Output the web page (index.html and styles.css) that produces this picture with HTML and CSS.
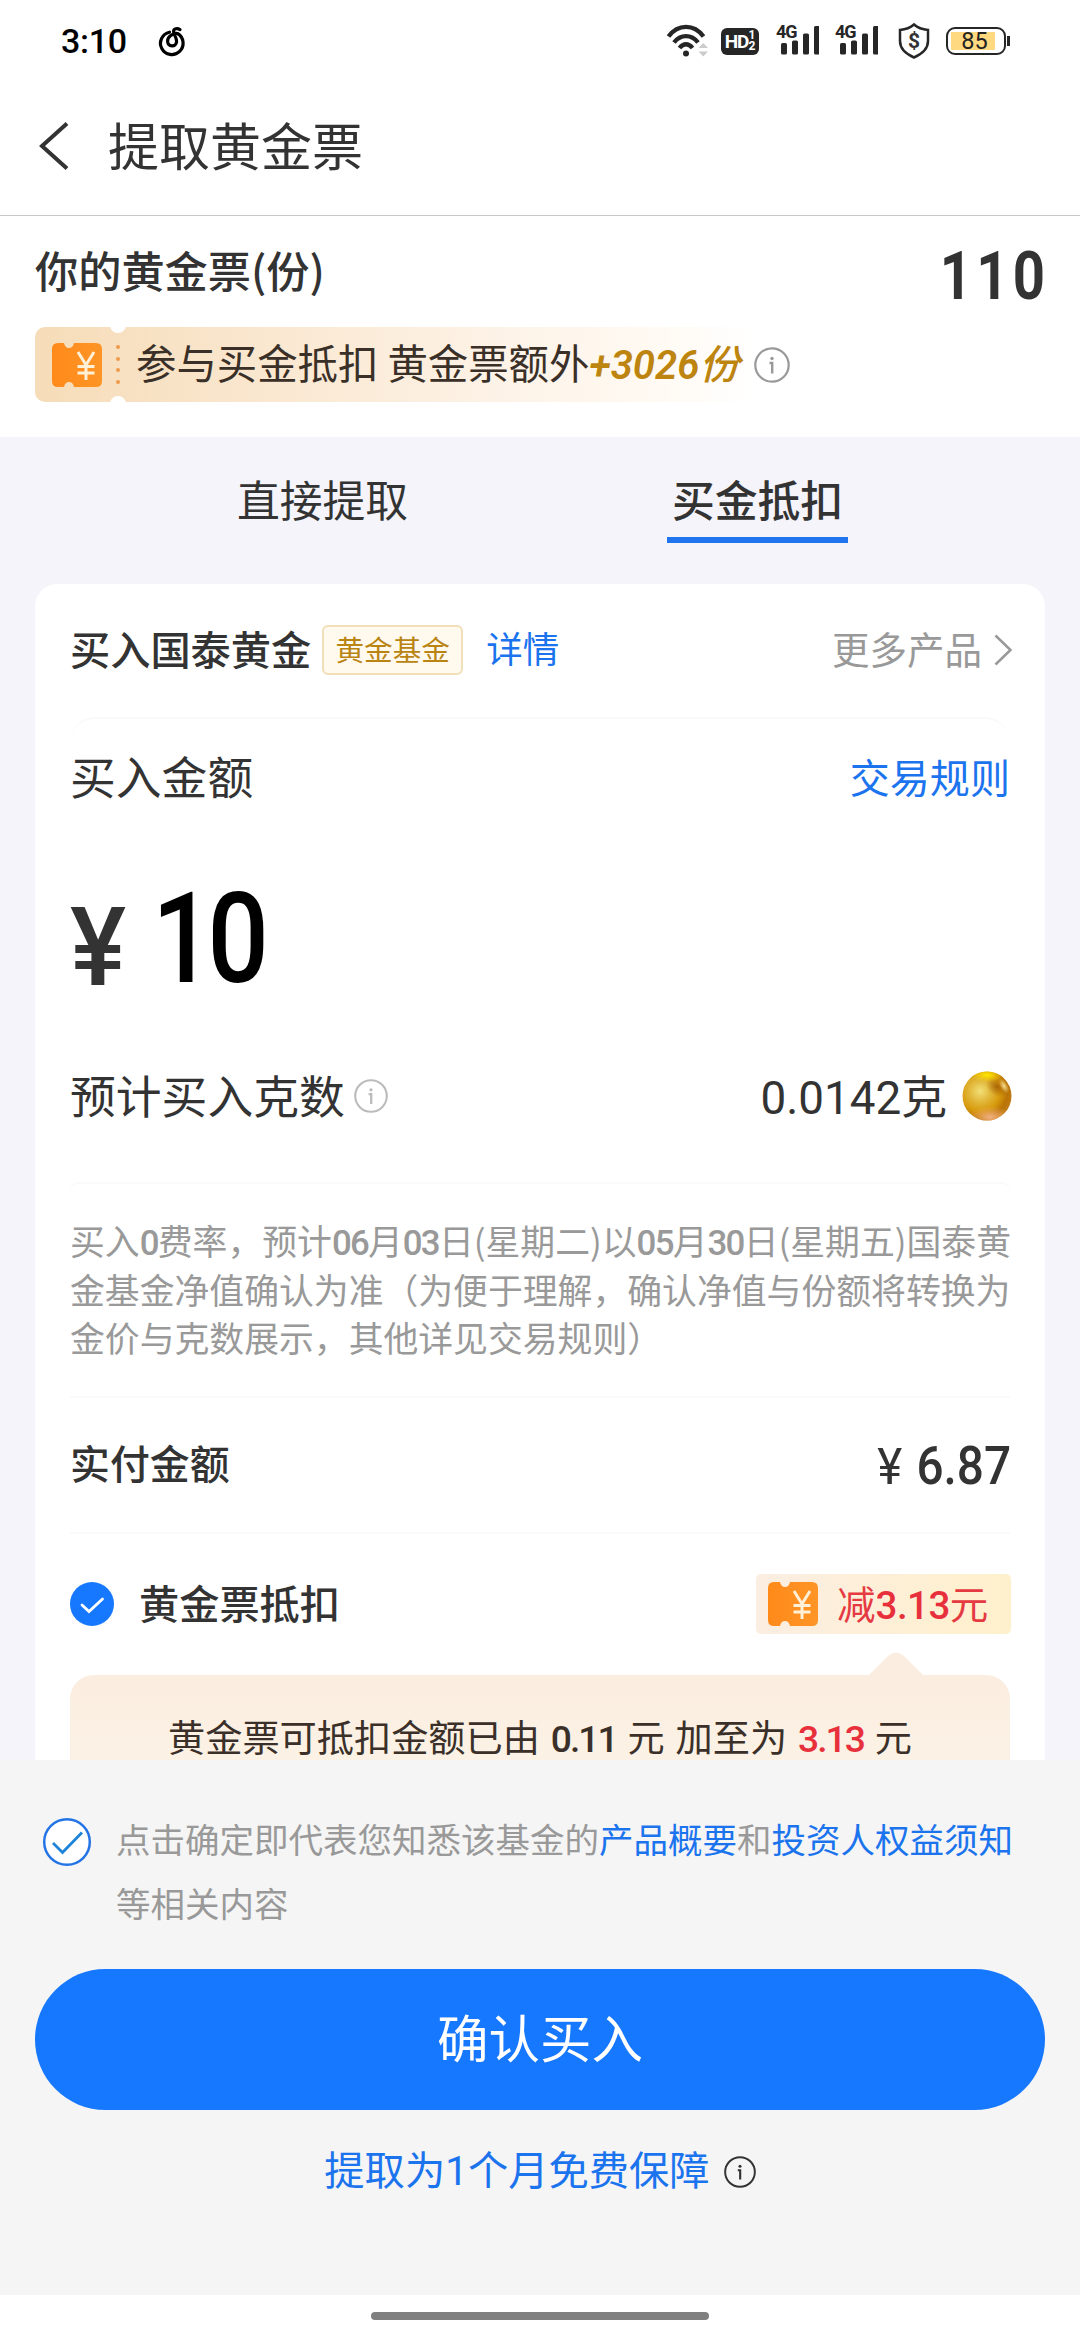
FILE: index.html
```html
<!DOCTYPE html>
<html lang="zh-CN">
<head>
<meta charset="utf-8">
<title>提取黄金票</title>
<link rel="stylesheet" href="styles.css">
</head>
<body>
<svg class="defs" width="0" height="0">
  <defs>
    <linearGradient id="ticketFill" x1="0" y1="0" x2="1" y2="0">
      <stop offset="0" stop-color="#ff8a1a"/><stop offset="1" stop-color="#fe9526"/>
    </linearGradient>
    <radialGradient id="ballFill" cx="0.36" cy="0.4" r="0.66">
      <stop offset="0" stop-color="#f3e078"/><stop offset="0.3" stop-color="#e3bb40"/>
      <stop offset="0.62" stop-color="#d79a0c"/><stop offset="0.85" stop-color="#b97206"/><stop offset="1" stop-color="#c07c14"/>
    </radialGradient>
    <radialGradient id="ballTop"><stop offset="0" stop-color="#ffea00"/><stop offset="1" stop-color="#ffd800" stop-opacity="0"/></radialGradient>
    <radialGradient id="ballShade"><stop offset="0" stop-color="#9a5200"/><stop offset="1" stop-color="#a05a00" stop-opacity="0"/></radialGradient>
    <radialGradient id="ballGlow"><stop offset="0" stop-color="#f3b184"/><stop offset="1" stop-color="#f0a860" stop-opacity="0"/></radialGradient>
    <radialGradient id="ballGlint"><stop offset="0" stop-color="#f6dc90"/><stop offset="1" stop-color="#f6dc90" stop-opacity="0"/></radialGradient>
    <clipPath id="ballClip"><circle cx="25" cy="25" r="24.500"/></clipPath>
    <symbol id="ticket" viewBox="0 0 50 44">
      <path fill="url(#ticketFill)" d="M6 0H12Q13 5 17 5T22 0H44Q50 0 50 6V38Q50 44 44 44H22Q21 39 17 39T12 44H6Q0 44 0 38V6Q0 0 6 0Z"/>
      <path fill="none" stroke="#fff0d8" stroke-width="3" d="M26 9L34 22L42 9M34 22V37M25.5 23.5H42.5M25.5 30H42.5"/>
    </symbol>
    <symbol id="info" viewBox="0 0 36 36">
      <circle cx="18" cy="18" r="16.7" fill="none" stroke="currentColor" stroke-width="2.2"/>
      <circle cx="18" cy="11.5" r="1.7" fill="currentColor"/>
      <path fill="none" stroke="currentColor" stroke-width="2.4" d="M15.5 16H18.2V26.5"/>
    </symbol>
    <symbol id="signal" viewBox="0 0 38 30">
      <rect x="0" y="17" width="6" height="11.5" rx="1.5"/><rect x="11" y="14.5" width="6" height="14" rx="1.5"/>
      <rect x="22" y="7.5" width="6" height="21" rx="1.5"/><rect x="33" y="0" width="6" height="28.5" rx="1.5"/>
    </symbol>
  </defs>
</svg>

<header class="status">
  <div class="status-left">
    <span class="clock">3:10</span>
    <svg class="music" viewBox="0 0 26 29"><path d="M10.5 5.2A11.3 11.3 0 1 0 18.5 6.5C14 6 8.3 9.5 8.6 14.5C9 20 17 20.5 17.6 14.8C18 11 14.5 7.5 14.6 4.2C14.7 1.5 18.5 1 21 2.6"/></svg>
  </div>
  <div class="status-right">
    <svg class="wifi" viewBox="0 0 42 34">
      <g fill="none" stroke="#262626" stroke-width="4.4"><path d="M1.5 12.5C11-.3 27-.3 36.5 12.5"/><path d="M7 18.5C13.5 10 24.5 10 31 18.5"/><path d="M12.5 24C16.5 19 21.5 19 25.5 24"/></g>
      <circle cx="19" cy="29.5" r="3" fill="#262626"/>
      <path fill="#ccc" d="M31.5 24L36.3 19L41 24ZM31.5 27.5H41L36.3 32.5Z"/>
    </svg>
    <div class="hd"><b>HD</b><span><i>1</i><i>2</i></span></div>
    <div class="signal"><svg><use href="#signal"/></svg><b>4G</b></div>
    <div class="signal"><svg><use href="#signal"/></svg><b>4G</b></div>
    <div class="shield">
      <svg viewBox="0 0 32 36"><path d="M16 1.5C20 5 25 6.5 30 7V18C30 26 24 31 16 34.5C8 31 2 26 2 18V7C7 6.5 12 5 16 1.5Z"/></svg>
      <b>$</b>
    </div>
    <div class="battery"><span>85</span></div>
  </div>
</header>

<nav class="titlebar">
  <svg class="back" viewBox="0 0 30 48"><path d="M28 1.5L3 24L28 46.5"/></svg>
  <h1>提取黄金票</h1>
</nav>

<section class="summary">
  <div class="balance"><h2>你的黄金票(份)</h2><strong>110</strong></div>
  <div class="promo">
    <svg class="ticket"><use href="#ticket"/></svg>
    <span class="perforation"><i></i><i></i><i></i><i></i></span>
    <span class="promo-text">参与买金抵扣 黄金票额外<em><span class="extra">+3026</span>份</em></span>
    <svg class="info promo-info"><use href="#info"/></svg>
  </div>
</section>

<main class="content">
  <div class="tabs">
    <div class="tab"><span>直接提取</span></div>
    <div class="tab active"><span>买金抵扣</span></div>
  </div>
  <div class="card">
    <div class="product">
      <b>买入国泰黄金</b><span class="tag">黄金基金</span><a>详情</a>
      <span class="more">更多产品<svg viewBox="0 0 18 32"><path d="M1.5 1.5L16.5 16L1.5 30.5"/></svg></span>
    </div>
    <section class="purchase">
      <div class="row amount-head"><span>买入金额</span><a>交易规则</a></div>
      <div class="amount"><span class="yen">¥</span><span class="value">10</span></div>
      <div class="row grams"><span>预计买入克数</span><svg class="info gram-info"><use href="#info"/></svg>
        <span class="gram-value"><span class="num">0.0142</span>克</span>
        <svg class="ball" viewBox="0 0 50 50">
          <circle cx="25" cy="25" r="24.5" fill="url(#ballFill)"/>
          <g clip-path="url(#ballClip)">
            <ellipse cx="35" cy="16" rx="12" ry="9" fill="url(#ballShade)" opacity=".75" transform="rotate(35 35 16)"/>
            <ellipse cx="25" cy="4" rx="16" ry="7" fill="url(#ballTop)"/>
            <ellipse cx="28" cy="46" rx="22" ry="11" fill="url(#ballGlow)"/>
            <ellipse cx="42" cy="15" rx="4" ry="8" fill="url(#ballGlint)" transform="rotate(-30 42 15)"/>
          </g>
        </svg>
      </div>
    </section>
    <p class="notice"><span>买入<b>0</b>费率，预计<b>06</b>月<b>03</b>日(星期二)以<b>05</b>月<b>30</b>日(星期五)国泰黄</span><span>金基金净值确认为准（为便于理解，确认净值与份额将转换为</span><span>金价与克数展示，其他详见交易规则）</span></p>
    <div class="row payable"><b>实付金额</b><span class="pay"><span class="pay-yen">¥</span><span class="pay-num">6.87</span></span></div>
    <div class="deduct">
      <svg class="checked" viewBox="0 0 44 44"><circle cx="22" cy="22" r="22" fill="#1677ff"/><path d="M12 23L19 29.5L32.5 17" fill="none" stroke="#fff" stroke-width="2.8" stroke-linecap="round"/></svg>
      <b>黄金票抵扣</b>
      <div class="saving"><svg class="ticket"><use href="#ticket"/></svg><span>减<b class="num">3.13</b>元</span></div>
    </div>
    <div class="bubble">
      <svg class="arrow" viewBox="0 0 56 24"><path d="M0 24L20 4Q28-3 36 4L56 24Z"/></svg>
      <span>黄金票可抵扣金额已由 <b class="num">0.11</b> 元 加至为 <b class="num red">3.13</b> 元</span>
    </div>
  </div>
</main>

<footer class="confirm">
  <div class="agree">
    <svg viewBox="0 0 50 50"><circle cx="25" cy="25" r="22.8" fill="#fff" stroke="#2474e5" stroke-width="2.5"/><path d="M11 26L20.5 35.5L40 15.5" fill="none" stroke="#1c83d8" stroke-width="2.8"/></svg>
    <p>点击确定即代表您知悉该基金的<a>产品概要</a>和<a>投资人权益须知</a><br>等相关内容</p>
  </div>
  <button>确认买入</button>
  <div class="guarantee"><a>提取为<span class="one">1</span>个月免费保障</a><svg class="info guarantee-info"><use href="#info"/></svg></div>
</footer>
<div class="home"><i></i></div>
</body>
</html>
```
FILE: styles.css
```css
* { box-sizing: border-box; margin: 0; padding: 0; }
body {
  width: 1080px; height: 2340px; overflow: hidden;
  display: flex; flex-direction: column;
  background: #fff; color: #333;
  font-family: "Noto Sans CJK SC", sans-serif;
  white-space: nowrap;
}
svg { display: block; flex: none; overflow: visible; }
.defs { position: absolute; }
i { font-style: normal; }
a { color: #1b74ee; }
b, h2 { font-weight: 500; }
.num { font-family: Roboto, sans-serif; line-height: 1; }

/* status bar */
.status { height: 82px; display: flex; justify-content: space-between; padding: 0 74px 0 61px; font-family: Roboto, sans-serif; }
.status-left, .status-right { display: flex; align-items: center; }
.clock { font-size: 34px; font-weight: 500; color: #000; letter-spacing: -0.3px; }
.music { width: 26px; height: 29px; margin-left: 32px; }
.music path { fill: none; stroke: #000; stroke-width: 3.2; stroke-linecap: round; }
.wifi { width: 42px; height: 34px; margin-right: 12px; }
.hd { width: 38px; height: 27px; border-radius: 6px; background: #262626; color: #fff; display: flex; align-items: center; justify-content: center; margin-right: 22px; }
.hd b { font-size: 19px; font-weight: 700; letter-spacing: -1px; }
.hd span { display: flex; flex-direction: column; font-size: 12px; font-weight: 700; line-height: 11px; }
.signal { width: 39px; height: 30px; position: relative; margin-right: 20px; }
.signal svg { width: 38px; height: 30px; fill: #262626; }
.signal b { position: absolute; left: -5px; top: -4px; font-size: 18px; line-height: 20px; font-weight: 700; color: #262626; background: #fff; height: 18px; letter-spacing: -1px; }
.shield { width: 32px; height: 36px; position: relative; margin-right: 16px; margin-left: -1px; }
.shield path { fill: none; stroke: #262626; stroke-width: 2.5; }
.shield b { position: absolute; inset: 0; text-align: center; font-size: 21px; line-height: 36px; font-weight: 700; }
.battery { width: 60px; height: 28px; border: 2.5px solid #262626; border-radius: 9px; padding: 3px; display: flex; position: relative; }
.battery::after { content: ""; position: absolute; right: -6px; top: 7px; width: 3px; height: 10px; background: #262626; }
.battery span { width: 44px; background: #ffd980; color: #222; font-size: 23.5px; line-height: 18px; text-align: center; padding-left: 3px; }

/* title */
.titlebar { height: 134px; display: flex; align-items: center; padding: 0 0 9px 39px; border-bottom: 1px solid #c8c8c8; }
.back { width: 30px; height: 48px; margin-right: 39px; margin-top: 4px; }
.back path { fill: none; stroke: #333; stroke-width: 4; }
h1 { font-size: 51px; font-weight: 400; line-height: 60px; }

/* ticket balance */
.summary { height: 221px; padding: 0 35px; }
.balance { height: 111px; display: flex; justify-content: space-between; align-items: center; }
.balance h2 { font-size: 43.2px; line-height: 50px; margin-top: -5px; }
.balance strong { font: 700 67px/67px Roboto, sans-serif; transform: scaleX(.84); transform-origin: right; letter-spacing: 5px; padding-top: 10px; margin-right: -4px; }
.promo {
  width: 800px; height: 75px; border-radius: 10px 0 0 10px; display: flex; align-items: center; padding-left: 17px;
  background: linear-gradient(90deg, #f6dcb8 0, #f9e5cb 23%, #fdf2e6 57%, #fffaf3 78%, #fff 90%);
  font-size: 40.4px; color: #3a3028;
}
.ticket { width: 50px; height: 44px; }
.perforation {
  width: 26px; height: 75px; margin: 0 5px 0 3px; display: flex; flex-direction: column; align-items: center; justify-content: center; gap: 7.5px;
  background: radial-gradient(circle at 50% -2px, #fff 7.5px, transparent 8.5px), radial-gradient(circle at 50% 77px, #fff 7.5px, transparent 8.5px);
}
.perforation i { width: 4px; height: 4px; border-radius: 50%; background: #f09a4a; }
.promo-text { margin-top: -5px; line-height: 60px; }
.promo em { color: #bd8510; font-weight: 500; }
.extra { font-family: Roboto, sans-serif; font-weight: 600; font-size: 40px; line-height: 1; }
.info { width: 36px; height: 36px; }
.promo-info { color: #999; margin-left: 14px; }

/* tabs */
.content { flex: 1; min-height: 0; overflow: hidden; background: #f4f4fa; padding: 0 35px; }
.tabs { height: 147px; display: flex; padding: 31px 70px 0; }
.tab { flex: 1; display: flex; flex-direction: column; align-items: center; font-size: 42.8px; line-height: 60px; }
.active { font-weight: 500; }
.active::after { content: ""; width: 181px; height: 6px; margin-top: 9px; background: #2075ee; }

/* product card */
.card { height: 1200px; background: #fff; border-radius: 22px 22px 0 0; padding: 0 35px; }
.product { height: 133px; padding-bottom: 6px; display: flex; align-items: center; font-size: 40.2px; }
.tag { height: 50px; width: 141px; margin: 5px 23px 0 11px; border: 2px solid #f1dfb9; border-radius: 6px; background: #fff9ee; color: #b98412; font-size: 28.6px; line-height: 44px; text-align: center; }
.product a { font-size: 36.5px; }
.more { margin-left: auto; display: flex; align-items: center; color: #999; font-size: 37.5px; }
.more svg { width: 18px; height: 32px; margin: 5px -2px 0 12px; }
.more path { fill: none; stroke: #999; stroke-width: 2.5; }
.row { display: flex; align-items: center; }
.purchase { height: 465px; border-top: 2px solid #fafafa; border-radius: 25px 25px 0 0; }
.amount-head { height: 116px; padding-bottom: 4px; font-size: 45.8px; justify-content: space-between; }
.amount-head a { font-size: 40.1px; }
.amount { height: 210px; display: flex; align-items: baseline; font-family: Roboto, sans-serif; }
.yen { font-size: 109px; font-weight: 500; line-height: 206px; width: 82px; transform: translateY(3px) scaleX(.97); transform-origin: left; }
.value { font-size: 127px; font-weight: 500; line-height: 208px; color: #000; transform: scaleX(.85); transform-origin: left; letter-spacing: -7px; }
.grams { height: 98px; padding-bottom: 1px; font-size: 45.8px; }
.gram-info { width: 34px; height: 34px; color: #bbb; margin: 5px 0 0 9px; }
.gram-value { margin-left: auto; }
.ball { width: 50px; height: 50px; margin: 4px -2px 0 15px; }
.notice { height: 214px; border-top: 2px solid #fafafa; border-radius: 8px 8px 0 0; padding-top: 32px; color: #999; font-size: 34.85px; line-height: 48.5px; display: flex; flex-direction: column; }
.notice b { font-family: Roboto, sans-serif; line-height: 1; letter-spacing: -1.75px; }
.payable { height: 136px; border-top: 2px solid #fafafa; padding-bottom: 4px; justify-content: space-between; font-size: 39.9px; }
.payable > b { margin-top: -4px; }
.pay { display: flex; align-items: baseline; font-family: Roboto, sans-serif; line-height: 60px; margin: 6px -1px 0 0; }
.pay-yen { font-size: 50px; transform: scaleX(.95); transform-origin: right; margin-right: 14px; }
.pay-num { font-size: 53px; font-weight: 500; transform: scaleX(.9); transform-origin: right; margin-left: -10px; }
.deduct { height: 143px; border-top: 2px solid #fafafa; display: flex; align-items: center; font-size: 40.2px; }
.checked { width: 44px; height: 44px; margin: -2px 25px 0 0; }
.deduct > b { margin-top: -6px; }
.saving { margin: -1px -1px 0 auto; width: 255px; height: 60px; border-radius: 5px; display: flex; align-items: center; padding-left: 12px; background: linear-gradient(90deg, #fbeee2, #fff0cc); color: #e63a42; font-size: 38.5px; }
.saving span { margin: -5px 0 0 19px; }
.saving .num { color: #e8303c; letter-spacing: -0.5px; }
.bubble { position: relative; height: 120px; border-radius: 24px 24px 0 0; padding-top: 31px; text-align: center; background: linear-gradient(#fbeddf, #fbf2e5 85px); color: #3a3029; font-size: 37.2px; line-height: 60px; word-spacing: 2.6px; }
.arrow { position: absolute; width: 56px; height: 24px; left: 798px; top: -23px; fill: #fbeddf; }
.bubble .num { letter-spacing: -2px; }
.bubble .red { color: #e8303c; }

/* confirmation area */
.confirm { height: 535px; background: #f5f5f5; padding: 0 35px; }
.agree { height: 209px; padding: 46px 0 0 7px; display: flex; color: #999; font-size: 34.5px; line-height: 64px; }
.agree svg { width: 50px; height: 50px; margin: 11px 24px 0 0; }
button { display: block; width: 100%; height: 141px; border: 0; border-radius: 71px; background: #1677ff; color: #fff; font: 400 51.5px/60px "Noto Sans CJK SC", sans-serif; padding-bottom: 7px; }
.guarantee { display: flex; align-items: center; justify-content: center; height: 114px; font-size: 40.3px; }
.one { font-family: Roboto, sans-serif; line-height: 1; }
.guarantee-info { width: 32px; height: 32px; color: #333; margin: 9px 0 0 14px; }
.home { height: 45px; background: #fff; padding-top: 17px; }
.home i { display: block; width: 338px; height: 8px; border-radius: 4px; background: #808080; margin: auto; }
```
